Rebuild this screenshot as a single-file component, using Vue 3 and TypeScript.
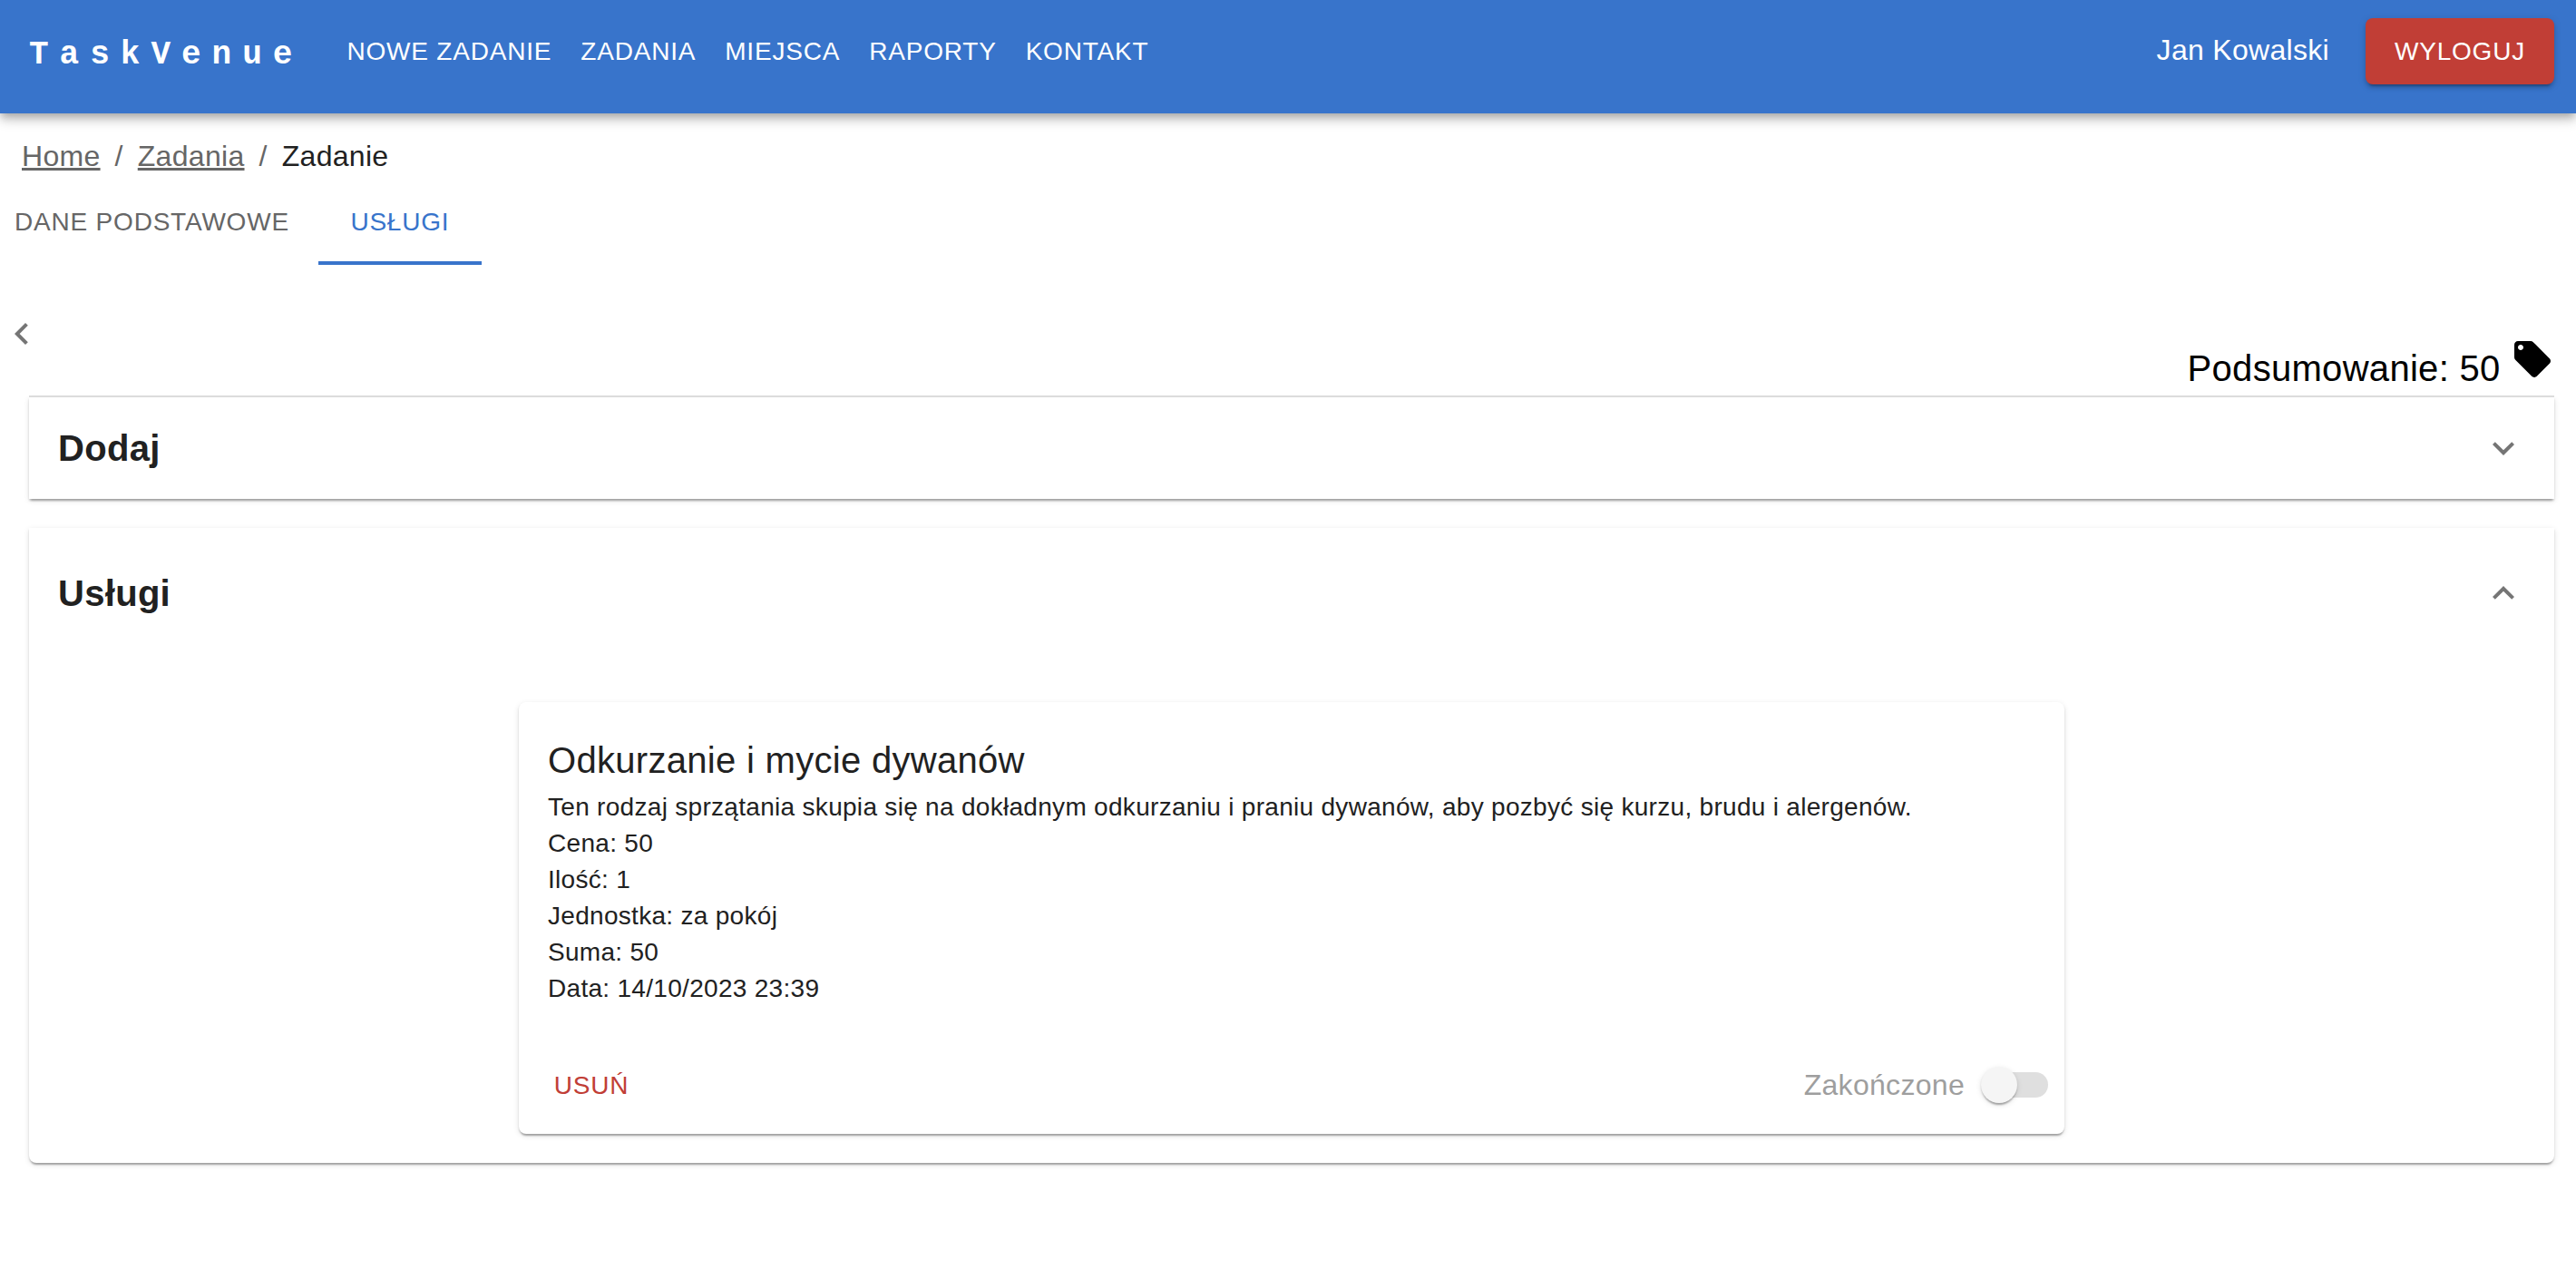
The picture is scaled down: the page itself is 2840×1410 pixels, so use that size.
<script setup lang="ts">
import { computed, ref } from 'vue'

interface Service {
  id: number
  name: string
  description: string
  price: number
  quantity: number
  unit: string
  date: string
  done: boolean
}

type TabId = 'basic' | 'services'

const navItems: string[] = ['Nowe zadanie', 'Zadania', 'Miejsca', 'Raporty', 'Kontakt']
const tabs: { id: TabId; label: string }[] = [
  { id: 'basic', label: 'Dane podstawowe' },
  { id: 'services', label: 'Usługi' },
]

const activeTab = ref<TabId>('services')
const addOpen = ref(false)
const listOpen = ref(true)

const services = ref<Service[]>([
  {
    id: 1,
    name: 'Odkurzanie i mycie dywanów',
    description:
      'Ten rodzaj sprzątania skupia się na dokładnym odkurzaniu i praniu dywanów, aby pozbyć się kurzu, brudu i alergenów.',
    price: 50,
    quantity: 1,
    unit: 'za pokój',
    date: '14/10/2023 23:39',
    done: false,
  },
])

const total = computed(() => services.value.reduce((sum, s) => sum + s.price * s.quantity, 0))

function remove(id: number): void {
  services.value = services.value.filter((s) => s.id !== id)
}
</script>

<template>
  <div class="page">
    <header class="app-bar">
      <a class="logo" href="#">TaskVenue</a>
      <nav class="nav">
        <a v-for="item in navItems" :key="item" class="nav-link" href="#">{{ item }}</a>
      </nav>
      <span class="user">Jan Kowalski</span>
      <button class="logout" type="button">Wyloguj</button>
    </header>

    <nav class="breadcrumbs" aria-label="breadcrumb">
      <a href="#">Home</a>
      <span class="separator">/</span>
      <a href="#">Zadania</a>
      <span class="separator">/</span>
      <span class="current">Zadanie</span>
    </nav>

    <div class="tabs" role="tablist">
      <button
        v-for="tab in tabs"
        :key="tab.id"
        class="tab"
        :class="{ active: activeTab === tab.id }"
        type="button"
        role="tab"
        :aria-selected="activeTab === tab.id"
        @click="activeTab = tab.id"
      >
        {{ tab.label }}
      </button>
    </div>

    <div class="summary-row">
      <button class="back" type="button" aria-label="Wstecz">
        <svg class="icon" viewBox="0 0 24 24" aria-hidden="true">
          <path d="M15.41 7.41 14 6l-6 6 6 6 1.41-1.41L10.83 12z" />
        </svg>
      </button>
      <div class="total">
        Podsumowanie: {{ total }}
        <svg class="icon" viewBox="0 0 24 24" aria-hidden="true">
          <path
            d="m21.41 11.58-9-9C12.05 2.22 11.55 2 11 2H4c-1.1 0-2 .9-2 2v7c0 .55.22 1.05.59 1.42l9 9c.36.36.86.58 1.41.58.55 0 1.05-.22 1.41-.59l7-7c.37-.36.59-.86.59-1.41 0-.55-.23-1.06-.59-1.42zM5.5 7C4.67 7 4 6.33 4 5.5S4.67 4 5.5 4 7 4.67 7 5.5 6.33 7 5.5 7z"
          />
        </svg>
      </div>
    </div>

    <main class="panels">
      <section class="panel divided">
        <button class="panel-head" type="button" :aria-expanded="addOpen" @click="addOpen = !addOpen">
          <span>Dodaj</span>
          <svg class="icon" viewBox="0 0 24 24" aria-hidden="true">
            <path v-if="addOpen" d="m12 8-6 6 1.41 1.41L12 10.83l4.59 4.58L18 14z" />
            <path v-else d="M16.59 8.59 12 13.17 7.41 8.59 6 10l6 6 6-6z" />
          </svg>
        </button>
      </section>

      <section class="panel last">
        <button
          class="panel-head"
          :class="{ expanded: listOpen }"
          type="button"
          :aria-expanded="listOpen"
          @click="listOpen = !listOpen"
        >
          <span>Usługi</span>
          <svg class="icon" viewBox="0 0 24 24" aria-hidden="true">
            <path v-if="listOpen" d="m12 8-6 6 1.41 1.41L12 10.83l4.59 4.58L18 14z" />
            <path v-else d="M16.59 8.59 12 13.17 7.41 8.59 6 10l6 6 6-6z" />
          </svg>
        </button>

        <div v-if="listOpen" class="panel-body">
          <article v-for="service in services" :key="service.id" class="card">
            <div class="card-content">
              <h2>{{ service.name }}</h2>
              <p>{{ service.description }}</p>
              <p>Cena: {{ service.price }}</p>
              <p>Ilość: {{ service.quantity }}</p>
              <p>Jednostka: {{ service.unit }}</p>
              <p>Suma: {{ service.price * service.quantity }}</p>
              <p>Data: {{ service.date }}</p>
            </div>
            <div class="card-actions">
              <button class="delete" type="button" @click="remove(service.id)">Usuń</button>
              <label class="done">
                <span>Zakończone</span>
                <input v-model="service.done" class="switch" type="checkbox" role="switch" disabled />
              </label>
            </div>
          </article>
        </div>
      </section>
    </main>
  </div>
</template>

<style>
body {
  margin: 0;
  background: #fff;
}
</style>

<style scoped>
.page {
  --blue: #3874cb;
  --red: #c13e36;
  --ink: #212121;
  --grey: #666;
  --paper-shadow: 0 4px 2px -2px rgba(0, 0, 0, 0.2), 0 2px 2px 0 rgba(0, 0, 0, 0.14),
    0 2px 6px 0 rgba(0, 0, 0, 0.12);
  color: var(--ink);
  font-family: 'Liberation Sans', Helvetica, Arial, sans-serif;
  font-size: 32px;
  line-height: 48px;
}

button {
  margin: 0;
  border: 0;
  background: none;
  color: inherit;
  font: inherit;
  cursor: pointer;
}

.icon {
  width: 48px;
  height: 48px;
  fill: currentColor;
}

/* App bar */
.app-bar {
  display: flex;
  align-items: center;
  padding: 20px 24px 32px 32px;
  background: var(--blue);
  color: #fff;
  box-shadow: 0 4px 8px -2px rgba(0, 0, 0, 0.2), 0 8px 10px 0 rgba(0, 0, 0, 0.14),
    0 2px 20px 0 rgba(0, 0, 0, 0.12);
}

.logo {
  margin-right: 32px;
  padding-top: 8px;
  color: inherit;
  font-family: 'Liberation Mono', 'Courier New', monospace;
  font-size: 36px;
  font-weight: 700;
  letter-spacing: 12px;
  line-height: 64px;
  text-decoration: none;
}

.nav {
  display: flex;
  flex: 1;
}

.nav-link,
.logout,
.tab,
.delete {
  font-size: 28px;
  letter-spacing: 0.02857em;
  line-height: 49px;
  text-transform: uppercase;
}

.nav-link {
  padding: 12px 16px;
  color: inherit;
  text-decoration: none;
}

.user {
  margin-right: 40px;
  padding-bottom: 4px;
  letter-spacing: 0.00938em;
}

.logout {
  padding: 12px 32px;
  border-radius: 8px;
  background: var(--red);
  box-shadow: 0 6px 2px -4px rgba(0, 0, 0, 0.2), 0 4px 4px 0 rgba(0, 0, 0, 0.14),
    0 2px 10px 0 rgba(0, 0, 0, 0.12);
}

/* Breadcrumbs */
.breadcrumbs {
  display: flex;
  padding: 23px 24px 0;
  color: var(--grey);
  letter-spacing: 0.00938em;
}

.breadcrumbs a {
  color: inherit;
  text-decoration-thickness: 3px;
  text-underline-offset: 2px;
}

.separator {
  margin: 0 16px;
}

.current {
  color: var(--ink);
}

/* Tabs */
.tabs {
  display: flex;
  padding-left: 16px;
}

.tab {
  min-width: 180px;
  height: 96px;
  padding: 0 32px;
  border-bottom: 4px solid transparent;
  border-top: 4px solid transparent;
  color: var(--grey);
}

.tab:first-child {
  padding-left: 0;
}

.tab.active {
  border-bottom-color: var(--blue);
  color: var(--blue);
}

/* Back arrow and total */
.summary-row {
  display: flex;
  align-items: flex-end;
  justify-content: space-between;
  min-height: 94px;
  padding: 52px 24px 0 0;
}

.back {
  display: flex;
  align-self: flex-start;
  padding: 0;
  color: #757575;
}

.total {
  color: #000;
  font-size: 40px;
  letter-spacing: 0.0075em;
  line-height: 64px;
}

/* Accordion panels */
.panels {
  display: flex;
  flex-direction: column;
  gap: 32px;
  padding: 0 24px 32px 32px;
}

.panel {
  position: relative;
  background: #fff;
  box-shadow: var(--paper-shadow);
}

.panel.last {
  border-radius: 0 0 8px 8px;
}

.panel.divided::before {
  position: absolute;
  top: -2px;
  right: 0;
  left: 0;
  height: 2px;
  background: #dcdcdc;
  content: '';
}

.panel-head {
  display: flex;
  align-items: center;
  justify-content: space-between;
  width: 100%;
  padding: 24px 32px;
  font-size: 40px;
  font-weight: 700;
  letter-spacing: 0.0075em;
  line-height: 64px;
}

.panel-head.expanded {
  padding: 40px 32px;
}

.panel-head .icon {
  color: #757575;
}

.panel-body {
  box-sizing: border-box;
  display: flex;
  flex-direction: column;
  gap: 32px;
  max-width: 1800px;
  margin: 0 auto;
  padding: 48px 48px 32px;
}

/* Service card */
.card {
  border-radius: 8px;
  background: #fff;
  box-shadow: var(--paper-shadow);
}

.card-content {
  padding: 32px;
}

.card h2 {
  margin: 0;
  font-size: 40px;
  font-weight: 400;
  letter-spacing: 0.0075em;
  line-height: 64px;
}

.card p {
  margin: 0;
  font-size: 28px;
  letter-spacing: 0.01071em;
  line-height: 40px;
}

.card-actions {
  display: flex;
  align-items: center;
  justify-content: space-between;
  padding: 16px;
}

.delete {
  min-width: 128px;
  padding: 12px 16px;
  color: var(--red);
}

.done {
  display: flex;
  align-items: center;
  color: #9e9e9e;
  letter-spacing: 0.00938em;
}

.switch {
  position: relative;
  width: 68px;
  height: 28px;
  margin: 24px 2px 24px 24px;
  border-radius: 14px;
  background: #dfdfdf;
  appearance: none;
}

.switch::before {
  position: absolute;
  top: -6px;
  left: -6px;
  width: 40px;
  height: 40px;
  border-radius: 50%;
  background: #f5f5f5;
  box-shadow: var(--paper-shadow);
  content: '';
}

.switch:checked::before {
  left: 34px;
}
</style>
